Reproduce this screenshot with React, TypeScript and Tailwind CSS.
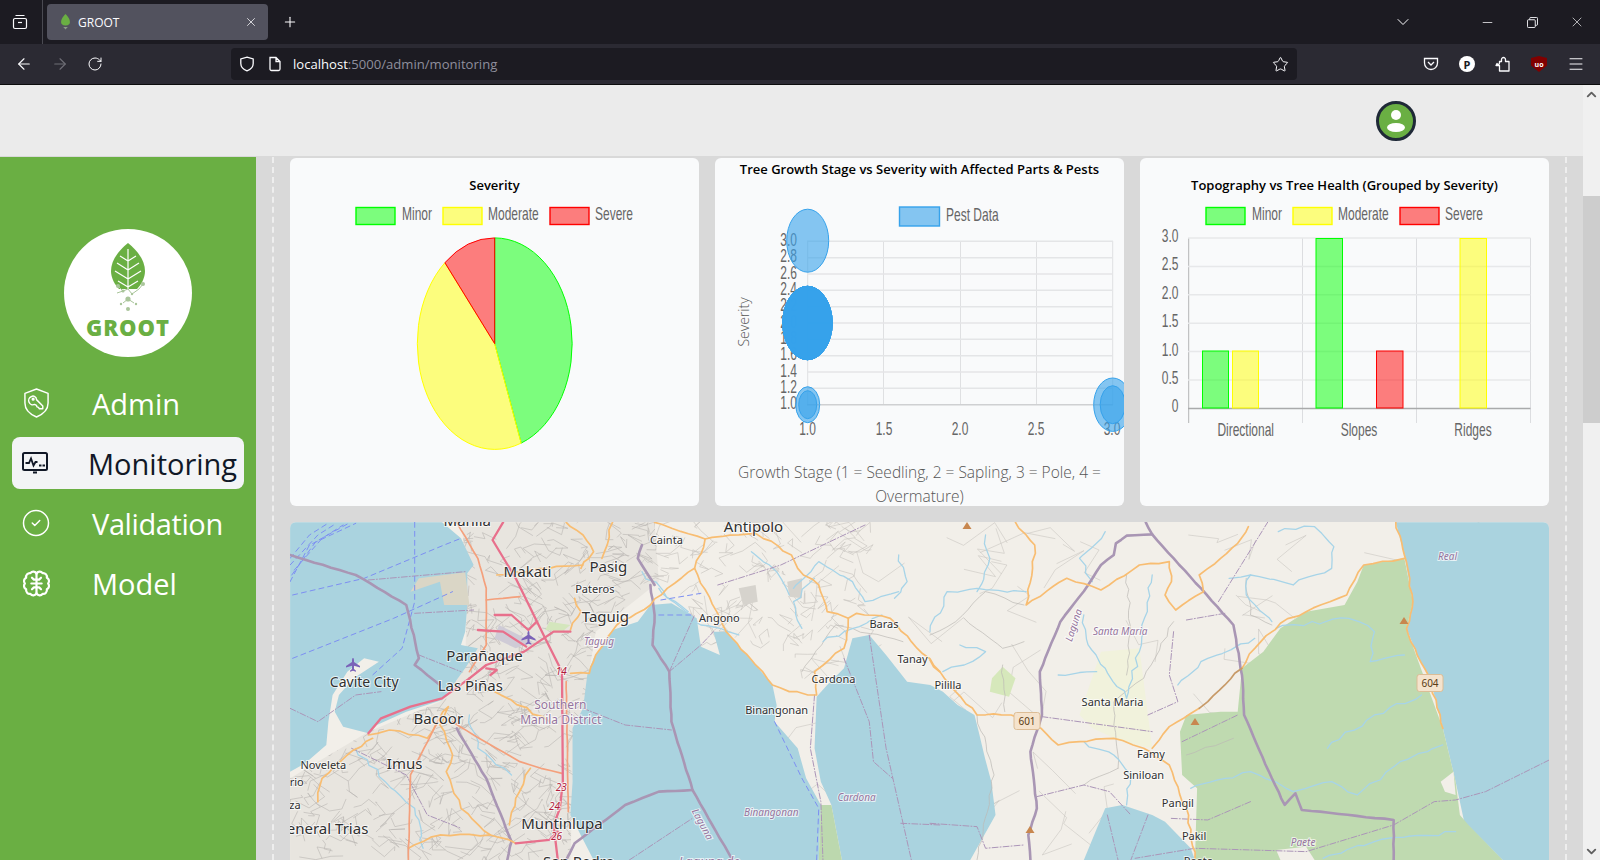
import { ArrowLeft, ArrowRight, ChevronDown, ChevronUp, CircleCheck, Menu, Minus, Plus, RotateCw, Star, X } from 'lucide-react';

// chart canvases in the screenshot are stretched 1.5x vertically
function ChartText({ x, y, children, anchor = 'middle', sy = 1.5 }: { x: number; y: number; children: string; anchor?: 'start' | 'middle' | 'end'; sy?: number }) {
  return (
    <text transform={`translate(${x} ${y}) scale(1 ${sy})`} textAnchor={anchor} dominantBaseline="central" fill="#666" className="font-['Liberation_Sans',sans-serif] text-[12px]">
      {children}
    </text>
  );
}

const legendItems = [
  { label: 'Minor', x: 356, fill: 'rgba(0,255,0,0.5)', stroke: '#00ff00', tx: 402 },
  { label: 'Moderate', x: 443, fill: 'rgba(255,255,0,0.5)', stroke: '#ffff00', tx: 488 },
  { label: 'Severe', x: 550, fill: 'rgba(255,0,0,0.5)', stroke: '#ff0000', tx: 595 },
];

function Legend({ dx = 0 }: { dx?: number }) {
  return (
    <g>
      {legendItems.map((item) => (
        <g key={item.label}>
          <rect x={item.x + dx} y={207.5} width={39} height={17} fill={item.fill} stroke={item.stroke} strokeWidth={1.4} />
          <ChartText x={item.tx + dx} y={213.5} anchor="start">{item.label}</ChartText>
        </g>
      ))}
    </g>
  );
}

function SeverityCard() {
  return (
    <section className="h-[348px] overflow-hidden rounded-md bg-[#f9fafb] pt-[17px]">
      <h3 className="text-center text-[13px] leading-5 font-semibold text-black">Severity</h3>
      <svg viewBox="290 195 409 311" className="block h-[311px] w-[409px]">
        <Legend />
        <path d="M494.7 343.7 L494.7 237.9 A77.5 105.8 0 0 1 521.2 443.1 Z" fill="rgba(0,255,0,0.5)" stroke="#00ff00" strokeWidth={1} />
        <path d="M494.7 343.7 L521.2 443.1 A77.5 105.8 0 0 1 444.9 262.7 Z" fill="rgba(255,255,0,0.5)" stroke="#ffff00" strokeWidth={1} />
        <path d="M494.7 343.7 L444.9 262.7 A77.5 105.8 0 0 1 494.7 237.9 Z" fill="rgba(255,0,0,0.5)" stroke="#ff0000" strokeWidth={1} />
      </svg>
    </section>
  );
}

const bubbleY = [3.0, 2.8, 2.6, 2.4, 2.2, 2.0, 1.8, 1.6, 1.4, 1.2, 1.0];

function GrowthCard() {
  const blue = 'rgba(54,162,235,0.6)';
  return (
    <section className="h-[348px] overflow-hidden rounded-md bg-[#f9fafb]">
      <h3 className="pt-[1px] text-center text-[13px] leading-5 font-semibold text-black">Tree Growth Stage vs Severity with Affected Parts &amp; Pests</h3>
      <svg viewBox="715 179 409 280" className="block h-[280px] w-[409px]">
        <rect x={899.5} y={207} width={40} height={19} fill={blue} stroke="#36a2eb" strokeWidth={1.4} />
        <ChartText x={946} y={215} anchor="start">Pest Data</ChartText>
        {[807.7, 883.5, 960.5, 1036.5, 1112.7].map((x) => (
          <line key={x} x1={x} x2={x} y1={241} y2={405} stroke="#dfe0e2" strokeWidth={1} />
        ))}
        {bubbleY.map((v, i) => (
          <line key={v} x1={807} x2={1113} y1={241.3 + i * 16.34} y2={241.3 + i * 16.34} stroke={v === 1 ? '#cfd0d2' : '#e4e5e7'} strokeWidth={1.5} />
        ))}
        {bubbleY.map((v, i) => (
          <ChartText key={v} x={797} y={239.5 + i * 16.34} anchor="end">{v.toFixed(1)}</ChartText>
        ))}
        {['1.0', '1.5', '2.0', '2.5', '3.0'].map((t, i) => (
          <ChartText key={t} x={[807.5, 884, 960, 1036, 1112][i]} y={429}>{t}</ChartText>
        ))}
        <text transform="translate(743 322) rotate(-90)" textAnchor="middle" dominantBaseline="central" fill="#555" className="font-['Open_Sans',sans-serif] text-[14px] font-light">Severity</text>
        <ellipse cx={807.7} cy={240.7} rx={21} ry={31.5} fill={blue} stroke="#36a2eb" />
        {[0, 1, 2, 3, 4, 5].map((i) => (
          <ellipse key={i} cx={807.5} cy={323} rx={24.7} ry={36.7} fill={blue} stroke="#36a2eb" />
        ))}
        <ellipse cx={807.7} cy={404.7} rx={12} ry={18} fill={blue} stroke="#36a2eb" />
        <ellipse cx={807.7} cy={404.7} rx={9} ry={14} fill={blue} stroke="#36a2eb" />
        <ellipse cx={1112.7} cy={404.7} rx={19} ry={26.7} fill={blue} stroke="#36a2eb" />
        <ellipse cx={1112.7} cy={404.7} rx={12.5} ry={19} fill={blue} stroke="#36a2eb" />
      </svg>
      <p className="mt-px px-2 text-center text-[15.5px] leading-6 font-light text-[#555]">Growth Stage (1 = Seedling, 2 = Sapling, 3 = Pole, 4 = Overmature)</p>
    </section>
  );
}

const barRects = [
  { x: 1202.5, w: 26, top: 351, c: 0 },
  { x: 1232.5, w: 26, top: 351, c: 1 },
  { x: 1316, w: 26.5, top: 238.5, c: 0 },
  { x: 1376.5, w: 26.5, top: 351, c: 2 },
  { x: 1460, w: 26.5, top: 238.5, c: 1 },
];

function TopographyCard() {
  const ticks = ['3.0', '2.5', '2.0', '1.5', '1.0', '0.5', '0'];
  return (
    <section className="h-[348px] overflow-hidden rounded-md bg-[#f9fafb] pt-[17px]">
      <h3 className="text-center text-[13px] leading-5 font-semibold text-black">Topography vs Tree Health (Grouped by Severity)</h3>
      <svg viewBox="1140 195 409 311" className="block h-[311px] w-[409px]">
        <Legend dx={850} />
        {[1302.5, 1416.5, 1530.5].map((x) => (
          <line key={x} x1={x} x2={x} y1={238} y2={423} stroke="#dcdde0" />
        ))}
        <line x1={1188.7} x2={1188.7} y1={238} y2={423} stroke="#b4b5b6" />
        {ticks.map((t, i) => (
          <g key={t}>
            <line x1={1188} x2={1530.5} y1={238 + i * 28.4} y2={238 + i * 28.4} stroke={t === '0' ? '#a9aaab' : '#e7e8ea'} strokeWidth={1.5} />
            <ChartText x={1178.5} y={235.5 + i * 28.4} anchor="end">{t}</ChartText>
          </g>
        ))}
        {barRects.map((bar) => (
          <rect key={bar.x} x={bar.x} y={bar.top} width={bar.w} height={408 - bar.top} fill={legendItems[bar.c].fill} stroke={legendItems[bar.c].stroke} strokeWidth={1} />
        ))}
        <ChartText x={1245.7} y={429.5}>Directional</ChartText>
        <ChartText x={1359} y={429.5}>Slopes</ChartText>
        <ChartText x={1473} y={429.5}>Ridges</ChartText>
      </svg>
    </section>
  );
}

const lineStyles = {
  minor: { stroke: '#bcb9b4', width: 0.7, amp: 7 },
  river: { stroke: '#a7d4e8', width: 1.3, amp: 12 },
  admin: { stroke: '#ab95b8', width: 1, dash: '6 2 1 2', amp: 0 },
  ferry: { stroke: '#7d8ff2', width: 1, dash: '5 4', amp: 0 },
  boundary: { stroke: '#a996b4', width: 2.6, amp: 2 },
  primary: { stroke: '#f8bd72', width: 1.7, amp: 7 },
  brown: { stroke: '#c79a68', width: 1.7, amp: 7 },
  trunk: { stroke: '#f4a07c', width: 1.7, amp: 1 },
  motorway: { stroke: '#e8708c', width: 2.3, amp: 0 },
};
type LineKind = keyof typeof lineStyles;

// small seeded generator so the map comes out the same on every load
function makeRandom(seed: number) {
  let state = seed;
  return () => {
    state = (state * 16807) % 2147483647;
    return state / 2147483647;
  };
}

function wiggle(points: string, amp: number, seed: number) {
  if (!amp) return points;
  const random = makeRandom(seed + 11);
  const pts = points.split(' ').map((p) => p.split(',').map(Number));
  const out: string[] = [points.split(' ')[0]];
  for (let i = 1; i < pts.length; i++) {
    const [x0, y0] = pts[i - 1];
    const [x1, y1] = pts[i];
    const steps = Math.max(1, Math.round(Math.hypot(x1 - x0, y1 - y0) / 22));
    for (let s = 1; s <= steps; s++) {
      const t = s / steps;
      const jitter = s === steps ? 0 : amp;
      out.push(`${(x0 + (x1 - x0) * t + (random() - 0.5) * jitter).toFixed(1)},${(y0 + (y1 - y0) * t + (random() - 0.5) * jitter).toFixed(1)}`);
    }
  }
  return out.join(' ');
}

function makeMesh(count: number, x0: number, x1: number, y0: number, y1: number, reach: number, seed: number) {
  const random = makeRandom(seed);
  const lines: string[] = [];
  for (let i = 0; i < count; i++) {
    let x = x0 + random() * (x1 - x0);
    let y = y0 + random() * (y1 - y0);
    const pts = [`${x.toFixed(0)},${y.toFixed(0)}`];
    for (let s = 0; s < 3; s++) {
      x += (random() - 0.5) * reach;
      y += (random() - 0.5) * reach;
      pts.push(`${x.toFixed(0)},${y.toFixed(0)}`);
    }
    lines.push(pts.join(' '));
  }
  return lines;
}

const urbanShape = '430,22 890,22 900,200 750,350 720,580 695,800 690,1035 24,1035 24,790 210,650 380,560 440,460 445,170';
const urbanMesh = makeMesh(620, 24, 900, 22, 1035, 80, 7);
const ruralMesh = makeMesh(70, 900, 2900, 22, 1035, 160, 19);
const eastGreyMesh = makeMesh(120, 880, 1400, 22, 480, 70, 31);

const leftLines: [LineKind, string][] = [
  ['minor', '1240,470 1320,330 1480,380'],
  ['river', '1220,220 1280,140 1360,200 1390,260 1470,230'],
  ['river', '1240,340 1220,260 1270,190'],
  ['river', '1290,380 1340,350 1430,300'],
  ['river', '1470,120 1490,200 1460,250'],
  ['river', '900,220 1000,330 1090,360'],
  ['river', '450,600 470,700 550,780'],
  ['river', '180,700 250,800 320,880 340,1000'],
  ['river', '860,170 940,260 970,290'],
  ['river', '1120,110 1180,170 1210,240'],
  ['admin', '210,195 440,170'],
  ['admin', '320,295 460,285'],
  ['admin', '330,420 430,470'],
  ['admin', '24,580 90,620 180,540 240,530'],
  ['admin', '720,580 820,630 930,645'],
  ['admin', '925,470 1000,390 1030,350'],
  ['admin', '925,470 985,300'],
  ['admin', '1400,360 1440,700 1500,1035'],
  ['admin', '1340,430 1400,620 1410,740 1455,790'],
  ['admin', '1475,925 1568,930'],
  ['admin', '830,1035 980,910'],
  ['admin', '1270,540 1260,700 1285,860 1290,1035'],
  ['admin', '1040,210 1190,150 1390,30'],
  ['admin', '170,700 300,780 350,900 430,940'],
  ['ferry', '30,240 200,190 390,90 430,70'],
  ['ferry', '320,22 320,260 290,400 220,480'],
  ['ferry', '30,430 270,310 410,230'],
  ['ferry', '24,200 70,90 180,25'],
  ['ferry', '28,180 85,80 160,27'],
  ['ferry', '34,165 100,70 150,30'],
  ['ferry', '24,150 90,60 130,28'],
  ['ferry', '24,130 70,60 110,28'],
  ['ferry', '1175,620 1240,790 1280,880 1275,1035'],
  ['ferry', '905,255 1000,235'],
  ['ferry', '900,300 980,300'],
  ['boundary', '24,120 180,180 300,270 330,430 320,450 380,510'],
  ['boundary', '880,210 890,300 885,390 925,470 930,620 980,825 1075,1035'],
  ['boundary', '860,90 850,130 890,210'],
  ['boundary', '980,825 900,830 820,870 700,985 680,1035'],
  ['boundary', '420,640 490,790 550,980 540,1035'],
  ['primary', '890,22 1010,72 985,160 920,220 880,270 800,330 750,420 735,475 690,475'],
  ['primary', '1010,72 1130,55 1215,120 1230,160 1280,210 1300,290 1350,310 1340,400 1270,470 1275,540 1210,530 1170,510 1130,450 1060,350 985,160'],
  ['primary', '1350,310 1370,295 1450,310 1500,380 1568,470'],
  ['primary', '680,22 720,60 745,110 715,160'],
  ['primary', '790,22 765,130'],
  ['primary', '515,180 640,160 720,150'],
  ['primary', '210,660 260,645 350,670 400,575 380,630 410,720 395,770 430,880 500,960 560,985'],
  ['primary', '90,860 100,790 160,720 220,670'],
  ['primary', '510,530 640,620'],
  ['primary', '595,760 560,850 545,930'],
  ['primary', '305,1000 380,960 500,960'],
  ['primary', '700,250 715,290 690,345'],
  ['trunk', '420,22 470,130 490,220 490,390 450,470'],
  ['trunk', '410,620 460,660 570,740 620,760 670,775'],
  ['trunk', '375,620 310,780 305,1035'],
  ['trunk', '490,255 570,245'],
  ['trunk', '680,500 685,890'],
  ['motorway', '530,22 505,75 560,190 630,370 670,470 672,800 665,880 650,930 660,1035'],
  ['motorway', '470,345 530,350 585,395'],
  ['motorway', '510,300 550,300 590,345 610,320'],
  ['motorway', '690,350 650,350 580,410 490,450 450,490'],
  ['motorway', '210,655 240,610 310,575 385,550 450,490'],
  ['motorway', '560,985 640,975 660,950'],
  ['motorway', '500,480 515,465 490,460'],
];

const rightLines: [LineKind, string][] = [
  ['minor', '220,270 130,230 60,320 0,360'],
  ['minor', '110,600 150,780 110,1035'],
  ['minor', '360,810 440,760'],
  ['minor', '570,320 500,490 430,560 440,760'],
  ['minor', '170,450 175,590'],
  ['minor', '80,310 170,400 220,380'],
  ['minor', '740,190 750,300 800,330'],
  ['minor', '460,180 470,350 460,480'],
  ['minor', '600,720 710,670'],
  ['river', '815,50 900,35 945,95 940,160 850,210 750,180 700,190'],
  ['river', '750,180 740,240 800,320'],
  ['river', '380,200 350,130 410,50'],
  ['river', '225,230 110,220 40,230 0,350'],
  ['river', '360,300 370,390 410,460 460,550 490,410 520,180'],
  ['river', '580,510 650,430 760,370'],
  ['river', '300,480 390,470'],
  ['river', '360,680 430,720 470,780 460,870'],
  ['river', '810,340 980,310 1040,350 1030,440 1110,420'],
  ['river', '930,700 1040,600 1150,540'],
  ['river', '610,820 750,770 850,830 940,800 1000,840 1100,740 1200,690'],
  ['river', '920,1030 1040,980 1230,950'],
  ['river', '70,390 130,410 80,450 30,470'],
  ['river', '130,60 140,130 110,230'],
  ['admin', '262,605 520,650'],
  ['admin', '600,315 690,295'],
  ['admin', '675,260 790,22'],
  ['admin', '570,350 560,480 580,560 510,600'],
  ['admin', '250,845 360,810 420,830 470,900'],
  ['admin', '0,925 110,935 130,1000 220,990'],
  ['admin', '1449,735 1300,830 1230,855 1180,860 1085,930 880,1010 620,1000 480,1030'],
  ['admin', '415,900 440,1035'],
  ['admin', '510,900 470,1035'],
  ['admin', '590,680 720,600'],
  ['admin', '750,860 650,915 560,910'],
  ['boundary', '505,22 520,58 460,62 435,85 430,120 400,150 370,210 305,320 257,470 262,600 235,710 250,880 230,960 235,1035'],
  ['boundary', '520,58 710,330 730,480 735,600 800,790 830,870 855,835 870,885 1085,915 1085,1035'],
  ['primary', '200,22 245,90 240,160 225,270 320,190 400,225 490,150 560,140 565,200 550,240 575,285 640,230 630,180 680,130 720,85 745,35'],
  ['primary', '0,435 60,530 110,600 190,600 260,640 300,690 350,680 430,670 500,700 560,750 600,880 620,1035'],
  ['primary', '630,580 560,635 520,700'],
  ['primary', '1110,130 1015,150 975,240 880,290 820,325 760,400 730,460'],
  ['primary', '1090,22 1110,120 1130,260 1115,340 1140,420 1170,490 1200,640'],
  ['brown', '730,460 690,510 650,560 630,580'],
];

const mapLabels: { x: number; y: number; t: string; size: number; italic?: boolean; rotate?: number; color?: string }[] = [
  ...([
    [445, 18, 'Manila', 15],
    [1125, 35, 'Antipolo', 15],
    [918, 75, 'Cainta', 11],
    [588, 170, 'Makati', 15],
    [780, 155, 'Pasig', 15],
    [748, 222, 'Pateros', 11],
    [773, 305, 'Taguig', 15],
    [1044, 310, 'Angono', 11],
    [1435, 327, 'Baras', 11],
    [1503, 433, 'Tanay', 11],
    [486, 424, 'Parañaque', 15],
    [200, 502, 'Cavite City', 14],
    [452, 512, 'Las Piñas', 15],
    [1315, 494, 'Cardona', 11],
    [1180, 586, 'Binangonan', 11],
    [376, 612, 'Bacoor', 15],
    [103, 752, 'Noveleta', 11],
    [296, 746, 'Imus', 15],
    [10, 802, 'Rosario', 11],
    [14, 872, 'Tanza', 11],
    [100, 942, 'General Trias', 15],
    [670, 928, 'Muntinlupa', 15],
    [710, 1040, 'San Pedro', 15],
  ] as [number, number, string, number][]).map(([x, y, t, size]) => ({ x: 280 + x / 2.376, y: 514 + y / 3, t, size })),
  ...([
    [758, 380, 'Taguig', 10, 0],
    [1370, 849, 'Cardona', 10, 0],
    [1167, 895, 'Binangonan', 10, 0],
    [1005, 930, 'Laguna', 10, 62],
    [1020, 1040, 'Laguna de', 13, 0],
  ] as [number, number, string, number, number][]).map(([x, y, t, size, rotate]) => ({ x: 280 + x / 2.376, y: 514 + y / 3, t, size, italic: true, rotate, color: '#96759e' })),
  { x: 280 + 666 / 2.376, y: 514 + 572 / 3, t: 'Southern', size: 12, color: '#96759e' },
  { x: 280 + 667 / 2.376, y: 514 + 616 / 3, t: 'Manila District', size: 12, color: '#96759e' },
  ...([
    [668, 472, '14'],
    [668, 820, '23'],
    [652, 876, '24'],
    [657, 967, '26'],
  ] as [number, number, string][]).map(([x, y, t]) => ({ x: 280 + x / 2.376, y: 514 + y / 3, t, size: 10, italic: true, color: '#b01c3c' })),
  ...([
    [42, 510, 'Pililla', 11],
    [427, 562, 'Santa Maria', 11],
    [517, 718, 'Famy', 11],
    [500, 780, 'Siniloan', 11],
    [580, 865, 'Pangil', 11],
    [618, 963, 'Pakil', 11],
    [628, 1040, 'Paete', 11],
  ] as [number, number, string, number][]).map(([x, y, t, size]) => ({ x: 930 + x / 2.34, y: 514 + y / 3, t, size })),
  ...([
    [1211, 127, 'Real', 10, 0],
    [335, 333, 'Laguna', 10, -72],
    [445, 352, 'Santa Maria', 10, 0],
    [873, 985, 'Paete', 10, 0],
  ] as [number, number, string, number, number][]).map(([x, y, t, size, rotate]) => ({ x: 930 + x / 2.34, y: 514 + y / 3, t, size, italic: true, rotate, color: '#96759e' })),
];

function Airplane({ x, y }: { x: number; y: number }) {
  return <path transform={`translate(${x} ${y})`} d="M0 -7 C1 -7 1 -5 1 -3 L7 1 V2.5 L1 0.8 V4 L3 5.7 V6.7 L0 5.8 L-3 6.7 V5.7 L-1 4 V0.8 L-7 2.5 V1 L-1 -3 C-1 -5 -1 -7 0 -7 Z" fill="#7a62b8" />;
}

function Peak({ x, y }: { x: number; y: number }) {
  return <path d={`M${x} ${y - 4} L${x + 4.5} ${y + 3} H${x - 4.5} Z`} fill="#c8874f" />;
}

function RoadShield({ x, y, label }: { x: number; y: number; label: string }) {
  return (
    <g>
      <rect x={x - 13} y={y - 8.5} width={26} height={17} rx={2.5} fill="#f5e3cd" stroke="#dcbd96" />
      <text x={x} y={y} textAnchor="middle" dominantBaseline="central" fill="#5b3c14" className="font-['Noto_Sans',sans-serif] text-[10px]">{label}</text>
    </g>
  );
}

function MapLines({ lines }: { lines: [LineKind, string][] }) {
  return (
    <>
      {lines.map(([kind, points], i) => {
        const style = lineStyles[kind] as { stroke: string; width: number; dash?: string; amp: number };
        return (
          <polyline key={i} points={wiggle(points, style.amp, i + 3)} fill="none" stroke={style.stroke} strokeWidth={style.width} strokeDasharray={style.dash} strokeLinejoin="round" strokeLinecap="round" vectorEffect="non-scaling-stroke" />
        );
      })}
    </>
  );
}

function Mesh({ lines, stroke, width }: { lines: string[]; stroke: string; width: number }) {
  return (
    <>
      {lines.map((points, i) => (
        <polyline key={i} points={points} fill="none" stroke={stroke} strokeWidth={width} vectorEffect="non-scaling-stroke" />
      ))}
    </>
  );
}

// hand drawn stand-in for the OpenStreetMap tiles, coords are reference px
function MapPanel() {
  return (
    <div className="mt-4 h-[338px] overflow-hidden rounded-t-md">
      <svg viewBox="290 522 1259 338" className="block h-[338px] w-[1259px]">
        <defs>
          <clipPath id="urban-clip">
            <polygon points={urbanShape} />
          </clipPath>
        </defs>
        <rect x={290} y={522} width={1259} height={338} fill="#f2efe9" />
        <g transform="translate(280 515) scale(0.4209 0.3333)">
          <polygon points={urbanShape} fill="#e8e5df" />
          <g clipPath="url(#urban-clip)">
            <Mesh lines={urbanMesh} stroke="#b9b6b1" width={0.6} />
          </g>
          <Mesh lines={ruralMesh} stroke="#c9c6c1" width={0.6} />
          <Mesh lines={eastGreyMesh} stroke="#c4c1bc" width={0.6} />
          <polygon points="1090,220 1130,210 1135,260 1100,270" fill="#d6d3cd" />
          <polygon points="1205,200 1240,190 1240,250 1210,245" fill="#d6d3cd" />
          <polygon points="24,22 385,22 430,70 460,150 445,175 445,270 440,350 430,390 470,400 440,460 385,555 300,590 230,630 210,655 150,635 130,590 140,540 175,490 235,440 200,430 160,470 125,540 115,620 110,690 60,745 24,770" fill="#aad3df" />
          <polygon points="310,230 330,190 440,172 450,270 390,270 380,200" fill="#dad6c6" />
          <polygon points="730,480 745,430 790,345 850,320 880,270 930,265 990,310 1000,395 1045,420 1030,350 1060,350 1130,450 1170,510 1180,570 1175,620 1230,700 1250,790 1285,870 1280,1035 745,1035 690,900 695,800 695,640 720,580" fill="#aad3df" />
          <polygon points="1275,545 1300,510 1340,460 1360,370 1400,360 1440,420 1490,500 1545,510 1575,530 1610,570 1650,600 1660,650 1675,730 1690,800 1700,900 1640,1035 1335,1035 1310,870 1285,800 1270,700" fill="#aad3df" />
          <polygon points="1285,870 1310,870 1335,1035 1280,1035" fill="#bcd8ae" />
          <polygon points="520,330 600,380 560,400 510,370" fill="#cfcbd6" />
          <polygon points="640,320 690,330 670,350 630,345" fill="#d4e6bd" />
        </g>
        <g transform="translate(930 515) scale(0.42735 0.3333)">
          <polygon points="1090,22 1110,120 1130,260 1115,340 1140,420 1170,490 1200,640 1230,800 1250,920 1340,1035 1449,1035 1449,22" fill="#aad3df" />
          <polygon points="1015,150 1110,130 1130,260 1115,340 1140,430 1200,640 1230,800 1240,900 1260,930 1340,1035 620,1035 625,820 590,780 585,650 600,600 680,590 720,590 730,460 780,410 820,340 880,290 970,270 1000,200" fill="#bfdab0" />
          <polygon points="400,410 490,400 520,700 450,680 380,640 350,600" fill="#f1f2dc" />
          <polygon points="145,490 170,455 200,490 185,545 140,530" fill="#d6e8bb" />
          <polygon points="410,880 450,870 520,900 550,920 610,1000 620,1035 360,1035" fill="#aad3df" />
          <polygon points="1195,800 1225,770 1230,840 1205,830" fill="#f2efe9" />
          <polygon points="810,1005 880,995 900,1035 820,1035" fill="#f2efe9" />
        </g>
        <g transform="translate(280 515) scale(0.4209 0.3333)">
          <MapLines lines={leftLines} />
        </g>
        <g transform="translate(930 515) scale(0.42735 0.3333)">
          <MapLines lines={rightLines} />
        </g>
        <Airplane x={528.5} y={638} />
        <Airplane x={353} y={665} />
        <Peak x={967} y={526} />
        <Peak x={1404} y={621} />
        <Peak x={1195} y={722} />
        <Peak x={1030} y={830} />
        <RoadShield x={1027} y={721} label="601" />
        <RoadShield x={1430} y={683} label="604" />
        {mapLabels.map((label) => (
          <text
            key={`${label.t}${label.x}`}
            transform={`translate(${label.x} ${label.y}) rotate(${label.rotate ?? 0})`}
            textAnchor="middle"
            dominantBaseline="central"
            fontSize={label.size}
            fontStyle={label.italic ? 'italic' : undefined}
            fill={label.color ?? '#303030'}
            stroke="#ffffff"
            strokeOpacity={0.7}
            strokeWidth={2}
            paintOrder="stroke"
            className="font-['Noto_Sans',sans-serif]"
          >
            {label.t}
          </text>
        ))}
      </svg>
    </div>
  );
}

function TabGroupIcon() {
  return (
    <svg viewBox="0 0 16 16" className="h-4 w-4" fill="none" stroke="#fbfbfe" strokeWidth="1.2">
      <path d="M3.5 1.5h9M1.5 6a1.5 1.5 0 0 1 1.5-1.5h10A1.5 1.5 0 0 1 14.5 6v7a1.5 1.5 0 0 1-1.5 1.5H3A1.5 1.5 0 0 1 1.5 13z" />
      <path d="M6 8.5h4" />
    </svg>
  );
}

function Favicon() {
  return (
    <svg viewBox="0 0 12 18" className="h-[16px] w-[11px]">
      <path d="M6 0C9 3 11 6 11 9C11 12 8 13 6 13C4 13 1 12 1 9C1 6 3 3 6 0Z" fill="#6aaf43" />
      <path d="M3.5 14.5H8.5L6 17.5Z" fill="#8c9a88" />
    </svg>
  );
}

function BrowserChrome() {
  return (
    <header className="shrink-0 font-['Open_Sans',sans-serif]">
      <div className="flex h-[44px] items-center bg-[#1c1b22] text-[#fbfbfe]">
        <div className="flex h-full w-[43px] items-center justify-center border-r border-[#4a4a52] pr-[3px]">
          <TabGroupIcon />
        </div>
        <div className="ml-[4px] flex h-[36px] w-[221px] items-center rounded bg-[#52525e] pr-[10px] pl-[13px]">
          <Favicon />
          <span className="ml-[7px] flex-1 pt-px text-[12px]">GROOT</span>
          <X className="h-[14px] w-[14px]" strokeWidth={1.3} />
        </div>
        <Plus className="ml-[14px] h-[16px] w-[16px]" strokeWidth={1.6} />
        <div className="flex-1" />
        <ChevronDown className="h-[20px] w-[20px]" strokeWidth={1.2} />
        <div className="ml-[67px] flex w-[120px] items-center justify-between pr-[15px]">
          <Minus className="h-[15px] w-[15px]" strokeWidth={1.2} />
          <svg viewBox="0 0 12 12" className="h-[11px] w-[11px]" fill="none" stroke="#fbfbfe" strokeWidth="1">
            <rect x="0.5" y="3" width="8.5" height="8.5" rx="1" />
            <path d="M3 3V1.5a1 1 0 0 1 1-1h6.5a1 1 0 0 1 1 1V8a1 1 0 0 1-1 1H9" />
          </svg>
          <X className="h-[16px] w-[16px]" strokeWidth={1} />
        </div>
      </div>
      <div className="flex h-[40px] items-center bg-[#2b2a33] text-[#fbfbfe]">
        <ArrowLeft className="ml-[15px] h-[18px] w-[18px]" strokeWidth={1.5} />
        <ArrowRight className="ml-[18px] h-[18px] w-[18px] text-[#6f6e76]" strokeWidth={1.5} />
        <RotateCw className="ml-[18px] h-[16px] w-[16px]" strokeWidth={1.5} />
        <div className="ml-[128px] flex h-[32px] w-[1066px] items-center rounded bg-[#1c1b22] pr-[8px] pl-[8px]">
          <svg viewBox="0 0 16 16" className="h-[16px] w-[16px]" fill="none" stroke="#fbfbfe" strokeWidth="1.3">
            <path d="M8 1.2 14.2 3v4.5c0 3.6-2.6 6-6.2 7.3C4.400 13.500 1.800 11.100 1.800 7.500V3z" />
          </svg>
          <svg viewBox="0 0 16 16" className="ml-[12px] h-[16px] w-[16px]" fill="none" stroke="#fbfbfe" strokeWidth="1.3">
            <path d="M3 1.500h6L13 5.500V13a1.500 1.500 0 0 1-1.500 1.500h-7A1.500 1.500 0 0 1 3 13zM9 1.500V5.500h4" />
          </svg>
          <p className="ml-[10px] flex-1 pt-[2px] text-[13.1px]">
            localhost<span className="text-[#8f8f9d]">:5000/admin/monitoring</span>
          </p>
          <Star className="h-[17px] w-[17px]" strokeWidth={1.4} />
        </div>
        <div className="ml-[126px] flex items-center gap-[20px]">
          <svg viewBox="0 0 16 16" className="h-[16px] w-[16px]" fill="none" stroke="#fbfbfe" strokeWidth="1.3">
            <path d="M1.500 2.500h13V7a6.500 6.500 0 0 1-13 0z" />
            <path d="M5 6l3 3 3-3" />
          </svg>
          <span className="flex h-[16px] w-[16px] items-center justify-center rounded-full bg-white text-[11px] leading-none font-bold text-[#1c1b22]">P</span>
          <svg viewBox="0 0 16 16" className="h-[16px] w-[16px]" fill="none" stroke="#fbfbfe" strokeWidth="1.3">
            <path d="M1 9.500h3.500V15H14V5.500H10.500V3.500A2 2 0 0 0 8.500 1.500 2 2 0 0 0 6.500 3.500V5.500H4.500V7A1.300 1.300 0 0 1 2 7.500z" strokeLinejoin="round" />
          </svg>
          <span className="flex h-[16px] w-[16px] items-center justify-center bg-[#800000] text-[7px] leading-none font-bold text-white [clip-path:polygon(50%_0,100%_12%,100%_60%,50%_100%,0_60%,0_12%)]">uo</span>
          <Menu className="h-[18px] w-[18px]" strokeWidth={1.3} />
        </div>
      </div>
      <div className="h-px bg-[#0c0c0d]" />
    </header>
  );
}

function LeafLogo() {
  return (
    <svg viewBox="0 0 46 70" className="h-[70px] w-[46px]">
      <path d="M23 0 C33 8 40 18 40 28 C40 35 36 42 32 46 L14 46 C10 42 6 35 6 28 C6 18 13 8 23 0Z" fill="#6aaf43" />
      <path d="M23 6 V46 M23 18 L31 13 M23 18 L15 13 M23 27 L34 20 M23 27 L12 20 M23 36 L36 28 M23 36 L10 28 M23 44 L33 38 M23 44 L13 38" stroke="#fff" strokeWidth="1.2" fill="none" />
      <path d="M13 43 L18 48 L23 46 L27 51 L34 46 M23 56 L18 60 M23 56 L29 60 M12 50 L18 48 M34 46 L38 41" stroke="#a9c59a" strokeWidth="1" fill="none" />
      <g fill="#a9c59a">
        <circle cx="13" cy="43" r="2" />
        <circle cx="18" cy="48" r="1.6" />
        <circle cx="27" cy="51" r="1.2" />
        <circle cx="38" cy="41" r="2" />
        <circle cx="23" cy="56" r="2.6" />
        <circle cx="16" cy="61" r="1.2" />
        <circle cx="31" cy="61" r="1.2" />
        <circle cx="23" cy="66" r="2" />
      </g>
    </svg>
  );
}

function AdminIcon() {
  return (
    <svg viewBox="0 0 28 32" className="h-[32px] w-[27px]" fill="none" stroke="currentColor" strokeWidth="1.5" strokeLinejoin="round">
      <path d="M14 1.500 26 6V16C26 23 20 28 14 30.500 8 28 2 23 2 16V6Z" />
      <path d="M8.500 9.500a3.500 3.500 0 0 1 5.500 3L20.500 19v3H17l-1-1.500-1.500-.5-.5-1.500L12 17.500a3.500 3.500 0 0 1-3.500-8z" />
      <circle cx="10.500" cy="12" r="0.9" fill="currentColor" />
    </svg>
  );
}

function MonitorIcon() {
  return (
    <svg viewBox="0 0 26 22" className="h-[22px] w-[26px]" fill="none" stroke="#111827" strokeWidth="2">
      <rect x="1" y="1" width="24" height="17" rx="1.500" />
      <path d="M3.500 11h3.500l2-4.500 2.500 7 2-3.500h2" strokeWidth="1.800" />
      <path d="M17 13.500h2.500M20.500 13.500H23" strokeWidth="1.800" />
      <path d="M11 20.500h4" />
    </svg>
  );
}

function BrainIcon() {
  return (
    <svg viewBox="0 0 24 24" className="h-[31px] w-[31px]" fill="none" stroke="currentColor" strokeWidth="1.700" strokeLinejoin="round" strokeLinecap="round">
      <path d="M12 4.500A2.700 2.700 0 0 0 7.300 4 2.900 2.900 0 0 0 4 7.500 2.900 2.900 0 0 0 3 12 2.900 2.900 0 0 0 4 16.500 2.900 2.900 0 0 0 7.300 20 2.700 2.700 0 0 0 12 19.500 2.700 2.700 0 0 0 16.700 20 2.900 2.900 0 0 0 20 16.500 2.900 2.900 0 0 0 21 12 2.900 2.900 0 0 0 20 7.500 2.900 2.900 0 0 0 16.700 4 2.700 2.700 0 0 0 12 4.500Z" />
      <path d="M12 4.500V19.500M12 9H10L8.500 7.500M12 9H14L15.500 7.500M12 12H8M12 12H16M12 15H10L8.500 16.500M12 15H14L15.500 16.500" />
    </svg>
  );
}

function Sidebar() {
  return (
    <aside className="flex w-[256px] shrink-0 flex-col bg-[#6aaf43] px-[12px] pt-[72px] font-['Open_Sans',sans-serif] text-white">
      <div className="mx-auto flex h-[128px] w-[128px] flex-col items-center rounded-full bg-white pt-[14px]">
        <LeafLogo />
        <span className="mt-[1px] text-[22px] leading-[26px] font-extrabold tracking-[1px] text-[#6aaf43]">GROOT</span>
      </div>
      <nav className="mt-[20px] flex flex-col gap-[8px]">
        <div className="flex h-[52px] items-center text-[29px]">
          <span className="flex w-[48px] justify-center"><AdminIcon /></span>
          <span className="ml-[32px] pt-[2px]">Admin</span>
        </div>
        <div className="flex h-[52px] items-center rounded-lg bg-[#f3f4f6] text-[29px] text-[#111827]">
          <span className="flex w-[46px] justify-center"><MonitorIcon /></span>
          <span className="ml-[30px] pt-[2px]">Monitoring</span>
        </div>
        <div className="flex h-[52px] items-center text-[29px]">
          <span className="flex w-[48px] justify-center"><CircleCheck className="h-[30px] w-[30px]" strokeWidth={1.2} /></span>
          <span className="ml-[32px] pt-[2px] tracking-[-0.4px]">Validation</span>
        </div>
        <div className="flex h-[52px] items-center text-[29px]">
          <span className="flex w-[48px] justify-center"><BrainIcon /></span>
          <span className="ml-[32px] pt-[2px]">Model</span>
        </div>
      </nav>
    </aside>
  );
}

function PageScrollbar() {
  return (
    <div className="flex w-[17px] shrink-0 flex-col items-center bg-[#f0f0f0] text-[#606060]">
      <ChevronUp className="mt-[2px] h-[15px] w-[15px]" strokeWidth={3} />
      <div className="mt-[94px] h-[227px] w-full bg-[#cdcdcd]" />
      <div className="flex-1" />
      <ChevronDown className="mb-[1px] h-[15px] w-[15px]" strokeWidth={3} />
    </div>
  );
}

export default function App() {
  return (
    <div className="flex h-screen flex-col overflow-hidden bg-[#ebebeb]">
      <BrowserChrome />
      <div className="flex min-h-0 flex-1">
        <div className="flex min-w-0 flex-1 flex-col">
          <div className="flex h-[72px] shrink-0 items-center justify-end border-b border-[#d9d9d9] bg-[#ebebeb] pr-[167px]">
            <div className="flex h-[40px] w-[40px] flex-col items-center justify-center rounded-full border-[3px] border-[#1f2937] bg-[#6aaf43]">
              <span className="h-[10px] w-[10px] rounded-full bg-white" />
              <span className="mt-[3px] h-[9px] w-[18px] rounded-[50%] bg-white" />
            </div>
          </div>
          <div className="flex min-h-0 flex-1">
            <Sidebar />
            <main className="min-w-0 flex-1 bg-[#d9d9d9] px-[16px] font-['Open_Sans',sans-serif]">
              <div className="h-full border-x-2 border-dashed border-[#eeeeee] px-[16px] pt-px">
                <div className="grid grid-cols-3 gap-[16px]">
                  <SeverityCard />
                  <GrowthCard />
                  <TopographyCard />
                </div>
                <MapPanel />
              </div>
            </main>
          </div>
        </div>
        <PageScrollbar />
      </div>
    </div>
  );
}
